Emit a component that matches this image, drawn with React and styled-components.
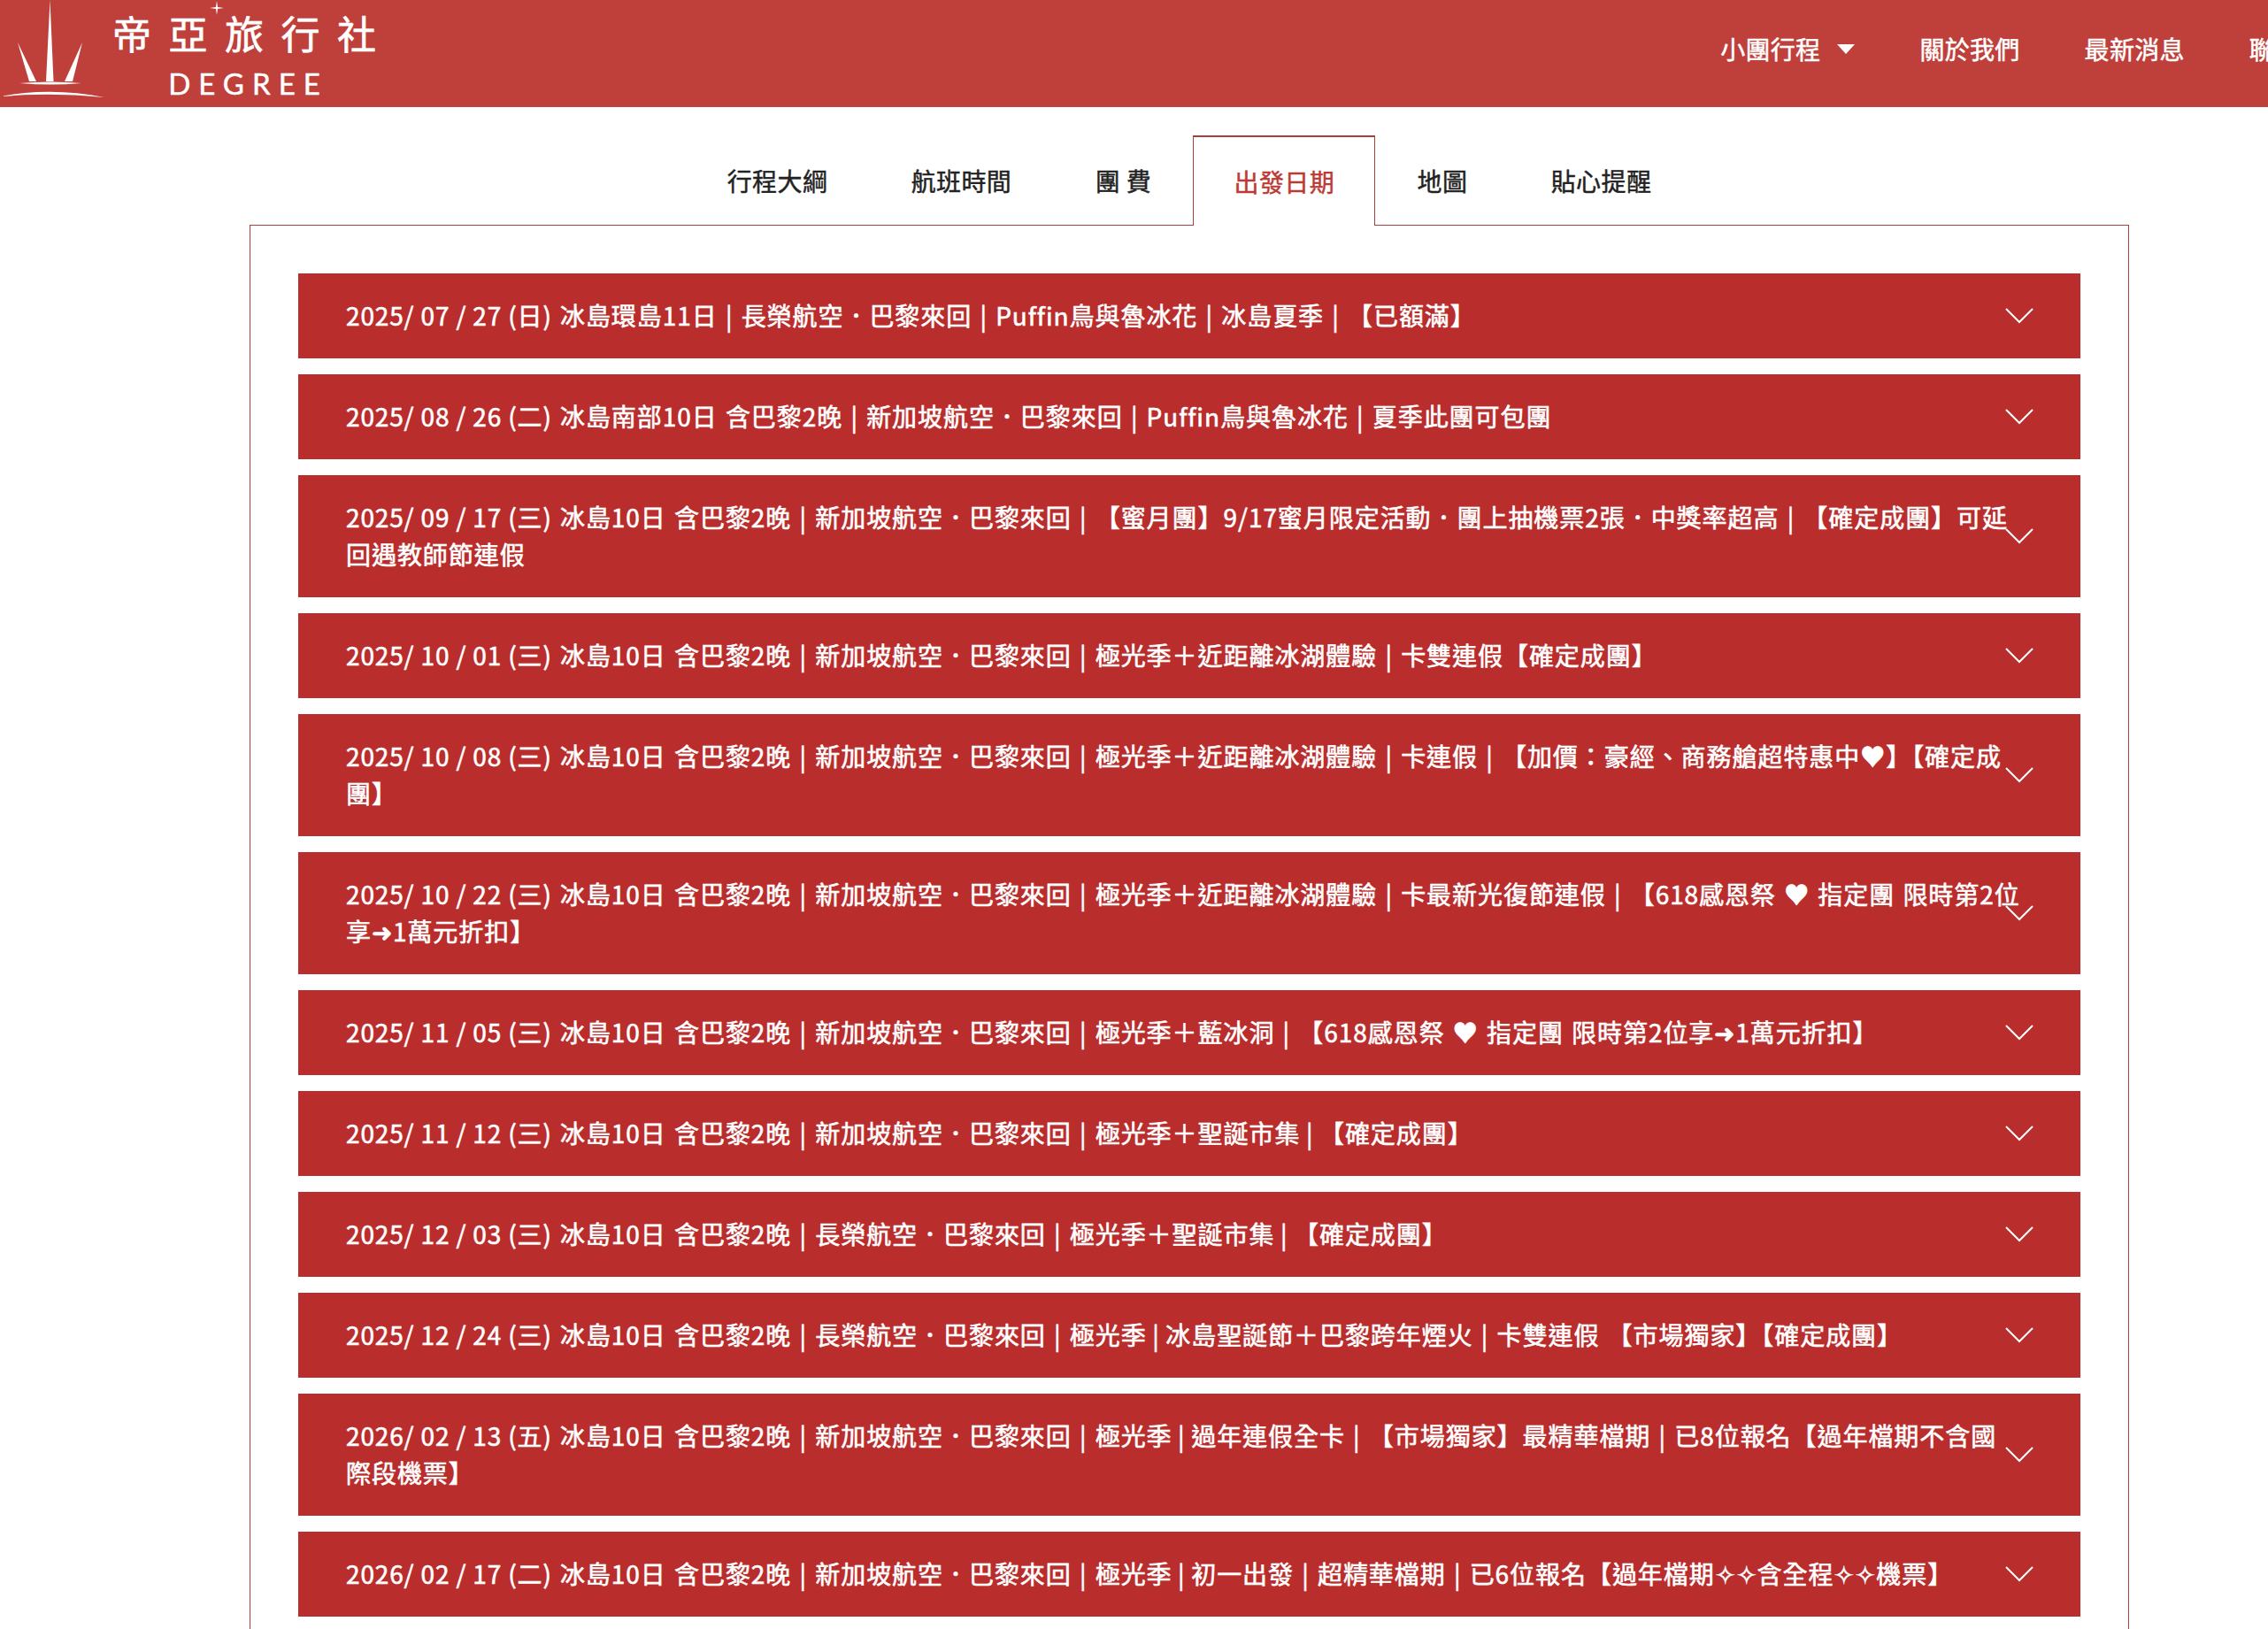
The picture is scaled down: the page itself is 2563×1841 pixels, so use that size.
import React from 'react';
import styled, { createGlobalStyle } from 'styled-components';

const Global = createGlobalStyle`
  html, body { margin: 0; padding: 0; background: #fff; }
  body { overflow: hidden; font-family: "Noto Sans CJK TC", "Noto Sans", sans-serif; }
`;

const Viewport = styled.div`
  width: 100%;
  height: 100vh;
  overflow: hidden;
`;

const Page = styled.div`
  width: 2688px;
`;

const Header = styled.header`
  height: 121px;
  background: #bf3f3b;
  display: flex;
  align-items: flex-start;
`;

const Brand = styled.div`
  display: flex;
  align-items: flex-start;
  position: relative;
`;

const Wordmark = styled.div`
  display: flex;
  flex-direction: column;
  align-items: center;
  color: #fff;
  margin-left: 8px;
  width: 300px;
  padding-top: 9px;
`;

const WordCn = styled.div`
  font-size: 44px;
  line-height: 56px;
  letter-spacing: 19.5px;
  margin-right: -19.5px;
  font-weight: 400;
  white-space: nowrap;
  -webkit-text-stroke: 0.7px #fff;
`;

const WordEn = styled.div`
  font-family: "Lato", sans-serif;
  font-size: 33px;
  line-height: 38px;
  letter-spacing: 9px;
  margin-right: -9px;
  margin-top: 10px;
  white-space: nowrap;
  -webkit-text-stroke: 0.5px #fff;
`;

const Nav = styled.nav`
  margin-left: auto;
  padding-right: 33px;
  height: 110px;
  display: flex;
  align-items: center;
  gap: 73px;
`;

const NavItem = styled.a`
  display: flex;
  align-items: center;
  gap: 19px;
  color: #fff;
  font-size: 28px;
  letter-spacing: 0.3px;
  white-space: nowrap;
  -webkit-text-stroke: 0.5px #fff;
`;

const Caret = styled.span`
  width: 0;
  height: 0;
  border-left: 10px solid transparent;
  border-right: 10px solid transparent;
  border-top: 11px solid #fff;
`;

const Main = styled.main`
  width: 2124px;
  margin: 0 auto;
`;

const Tabs = styled.div`
  display: flex;
  justify-content: center;
  margin-top: 32px;
  position: relative;
  z-index: 1;
  margin-bottom: -1px;
`;

const Tab = styled.a`
  box-sizing: border-box;
  display: flex;
  align-items: center;
  height: ${(p) => (p.$active ? '102px' : '101px')};
  padding: 0 ${(p) => (p.$active ? '45.2px' : '46.2px')} 1px;
  font-size: 28px;
  letter-spacing: 0.4px;
  white-space: pre;
  -webkit-text-stroke: 0.45px ${(p) => (p.$active ? '#bb3a36' : '#222')};
  color: ${(p) => (p.$active ? '#bb3a36' : '#222')};
  background: ${(p) => (p.$active ? '#fff' : 'transparent')};
  border: 1px solid ${(p) => (p.$active ? '#a9403d' : 'transparent')};
  border-top-width: ${(p) => (p.$active ? '2px' : '1px')};
  border-bottom: 0;
`;

const Panel = styled.section`
  box-sizing: border-box;
  border: 1px solid #ab413e;
  padding: 54px 54px 120px;
  display: flex;
  flex-direction: column;
  gap: 18px;
`;

const Row = styled.div`
  position: relative;
  background: #b92e2d;
  color: #fff;
  padding: 26px 54px 28px;
  font-size: 28px;
  line-height: 42px;
  letter-spacing: 0.95px;
  word-spacing: 2px;
  -webkit-text-stroke: 0.6px #fff;
`;

const Line = styled.div`
  white-space: pre;
`;

const DateText = styled.span`
  word-spacing: 0;
  letter-spacing: 0.85px;
`;

const Chevron = styled.svg`
  position: absolute;
  right: 53px;
  top: 50%;
  width: 32px;
  height: 18px;
  margin-top: -9px;
  fill: none;
  stroke: #fff;
  stroke-width: 2;
`;

const T = '\u2009|\u2009';
const rows = [
  { date: '2025/ 07 / 27 (日)', lines: [' 冰島環島11日 | 長榮航空．巴黎來回 | Puffin鳥與魯冰花 | 冰島夏季 | 【已額滿】'] },
  { date: '2025/ 08 / 26 (二)', lines: [' 冰島南部10日 含巴黎2晚 | 新加坡航空．巴黎來回 | Puffin鳥與魯冰花 | 夏季此團可包團'] },
  { date: '2025/ 09 / 17 (三)', lines: [' 冰島10日 含巴黎2晚 | 新加坡航空．巴黎來回 | 【蜜月團】9/17蜜月限定活動．團上抽機票2張．中獎率超高 | 【確定成團】可延', '回遇教師節連假'] },
  { date: '2025/ 10 / 01 (三)', lines: [' 冰島10日 含巴黎2晚 | 新加坡航空．巴黎來回 | 極光季＋近距離冰湖體驗 | 卡雙連假【確定成團】'] },
  { date: '2025/ 10 / 08 (三)', lines: [' 冰島10日 含巴黎2晚 | 新加坡航空．巴黎來回 | 極光季＋近距離冰湖體驗 | 卡連假 | 【加價：豪經、商務艙超特惠中♥】【確定成', '團】'] },
  { date: '2025/ 10 / 22 (三)', lines: [' 冰島10日 含巴黎2晚 | 新加坡航空．巴黎來回 | 極光季＋近距離冰湖體驗 | 卡最新光復節連假 | 【618感恩祭 ♥ 指定團 限時第2位', '享➜1萬元折扣】'] },
  { date: '2025/ 11 / 05 (三)', lines: [' 冰島10日 含巴黎2晚 | 新加坡航空．巴黎來回 | 極光季＋藍冰洞 | 【618感恩祭 ♥ 指定團 限時第2位享➜1萬元折扣】'] },
  { date: '2025/ 11 / 12 (三)', lines: [` 冰島10日 含巴黎2晚 | 新加坡航空．巴黎來回 | 極光季＋聖誕市集${T}【確定成團】`] },
  { date: '2025/ 12 / 03 (三)', lines: [` 冰島10日 含巴黎2晚 | 長榮航空．巴黎來回 | 極光季＋聖誕市集${T}【確定成團】`] },
  { date: '2025/ 12 / 24 (三)', lines: [` 冰島10日 含巴黎2晚 | 長榮航空．巴黎來回 | 極光季${T}冰島聖誕節＋巴黎跨年煙火 | 卡雙連假 【市場獨家】【確定成團】`] },
  { date: '2026/ 02 / 13 (五)', lines: [` 冰島10日 含巴黎2晚 | 新加坡航空．巴黎來回 | 極光季${T}過年連假全卡 | 【市場獨家】最精華檔期 | 已8位報名【過年檔期不含國`, '際段機票】'] },
  { date: '2026/ 02 / 17 (二)', lines: [` 冰島10日 含巴黎2晚 | 新加坡航空．巴黎來回 | 極光季${T}初一出發 | 超精華檔期 | 已6位報名【過年檔期✧✧含全程✧✧機票】`] },
];

const tabs = ['行程大綱', '航班時間', '團 費', '出發日期', '地圖', '貼心提醒'];

const Crown = () => (
  <svg width="118" height="112" viewBox="0 0 118 112" style={{ display: 'block' }}>
    <g fill="#fff">
      <path d="M56.5 0 L60.5 92 L52 92 Z" />
      <path d="M20 48 L41 92 L33 92 Z" />
      <path d="M93 48 L82 92 L73 92 Z" />
      <path d="M22 94 Q57 91 92 94 Q57 97 22 94 Z" />
      <path d="M0 109 Q58 98 118 110 Q58 104 0 109 Z" />
    </g>
  </svg>
);

const Spark = styled.svg`
  position: absolute;
  left: 237px;
  top: 1px;
  width: 16px;
  height: 16px;
  fill: #fff;
`;

export default function App() {
  return (
    <Viewport>
      <Global />
      <Page>
        <Header>
          <Brand>
            <Crown />
            <Wordmark>
              <WordCn>帝亞旅行社</WordCn>
              <WordEn>DEGREE</WordEn>
            </Wordmark>
            <Spark viewBox="0 0 16 16"><path d="M8 0 L9 7 L16 8 L9 9 L8 16 L7 9 L0 8 L7 7 Z" /></Spark>
          </Brand>
          <Nav>
            <NavItem>小團行程<Caret /></NavItem>
            <NavItem>關於我們</NavItem>
            <NavItem>最新消息</NavItem>
            <NavItem>聯絡我們</NavItem>
          </Nav>
        </Header>
        <Main>
          <Tabs>
            {tabs.map((t, i) => (
              <Tab key={t} $active={i === 3}>{t}</Tab>
            ))}
          </Tabs>
          <Panel>
            {rows.map(({ date, lines }) => (
              <Row key={date}>
                {lines.map((l, i) => (
                  <Line key={l}>{i === 0 && <DateText>{date}</DateText>}{l}</Line>
                ))}
                <Chevron viewBox="0 0 32 18"><polyline points="1,1 16,16 31,1" /></Chevron>
              </Row>
            ))}
          </Panel>
        </Main>
      </Page>
    </Viewport>
  );
}
